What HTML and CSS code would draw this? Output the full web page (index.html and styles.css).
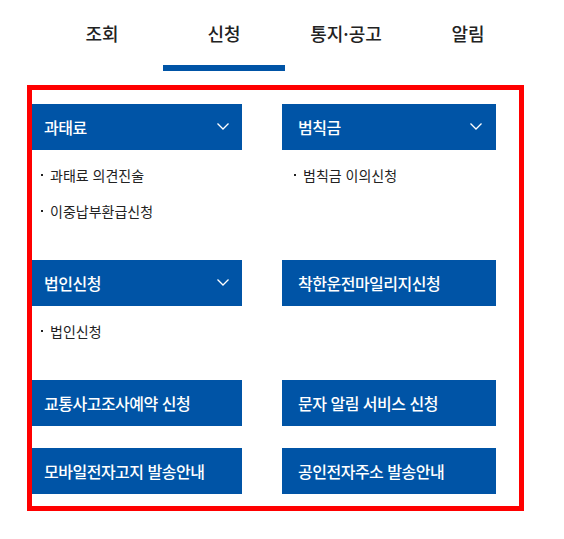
FILE: index.html
```html
<!DOCTYPE html>
<html lang="ko">
<head>
<meta charset="utf-8">
<title>신청</title>
<link rel="stylesheet" href="styles.css">
</head>
<body>
  <nav class="tabs">
    <a class="tab">조회</a>
    <a class="tab tab--active">신청</a>
    <a class="tab">통지·공고</a>
    <a class="tab">알림</a>
  </nav>

  <section class="menu-box">
    <div class="menu-grid">
      <div class="menu-item">
        <div class="menu-btn">과태료
          <svg class="chev" width="12" height="7" viewBox="0 0 12 7"><path d="M0.5 0.5 L6 6 L11.5 0.5" fill="none" stroke="#fff" stroke-width="1.3"/></svg>
        </div>
        <ul class="sub">
          <li>과태료 의견진술</li>
          <li>이중납부환급신청</li>
        </ul>
      </div>
      <div class="menu-item menu-item--right">
        <div class="menu-btn">범칙금
          <svg class="chev" width="12" height="7" viewBox="0 0 12 7"><path d="M0.5 0.5 L6 6 L11.5 0.5" fill="none" stroke="#fff" stroke-width="1.3"/></svg>
        </div>
        <ul class="sub">
          <li>범칙금 이의신청</li>
        </ul>
      </div>

      <div class="menu-item">
        <div class="menu-btn">법인신청
          <svg class="chev" width="12" height="7" viewBox="0 0 12 7"><path d="M0.5 0.5 L6 6 L11.5 0.5" fill="none" stroke="#fff" stroke-width="1.3"/></svg>
        </div>
        <ul class="sub">
          <li>법인신청</li>
        </ul>
      </div>
      <div class="menu-item menu-item--right">
        <div class="menu-btn">착한운전마일리지신청</div>
      </div>

      <div class="menu-item">
        <div class="menu-btn">교통사고조사예약 신청</div>
      </div>
      <div class="menu-item menu-item--right">
        <div class="menu-btn">문자 알림 서비스 신청</div>
      </div>

      <div class="menu-item">
        <div class="menu-btn">모바일전자고지 발송안내</div>
      </div>
      <div class="menu-item menu-item--right">
        <div class="menu-btn">공인전자주소 발송안내</div>
      </div>
    </div>
  </section>
</body>
</html>
```

FILE: styles.css
```css
* {
  box-sizing: border-box;
}

body {
  margin: 0;
  background: #fff;
  font-family: "Noto Sans CJK KR", "Noto Sans", sans-serif;
  color: #222;
}

/* top tab bar */
.tabs {
  display: flex;
  margin-left: 41px;
}

.tab {
  width: 122px;
  padding: 21px 0 20px;
  border-bottom: 6px solid transparent;
  text-align: center;
  font-size: 18px;
  line-height: 24px;
  font-weight: 500;
  color: #222;
}

.tab--active {
  border-bottom-color: #0054a6;
}

/* outlined menu area */
.menu-box {
  width: 497px;
  margin: 14px 0 0 27px;
  border: 5px solid #ff0000;
  padding: 14px 0 12px;
}

.menu-grid {
  display: grid;
  grid-template-columns: 210px 214px;
  column-gap: 40px;
  row-gap: 22px;
  align-items: start;
}

.menu-btn {
  display: flex;
  align-items: center;
  justify-content: space-between;
  height: 46px;
  padding: 0 13px 1px 12px;
  background: #0054a6;
  color: #fff;
  font-size: 16px;
  font-weight: 500;
  letter-spacing: -0.5px;
}

.menu-item--right .menu-btn {
  padding: 0 14px 1px 16px;
}

.chev {
  display: block;
  flex: none;
}

.sub {
  list-style: none;
  margin: 0;
  padding: 13px 0 15px 9px;
  display: flex;
  flex-direction: column;
  gap: 12px;
}

.menu-item--right .sub {
  padding-left: 12px;
}

.sub li {
  display: flex;
  align-items: center;
  font-size: 14px;
  line-height: 24px;
  color: #222;
}

.sub li::before {
  content: "";
  width: 2px;
  height: 2px;
  margin-right: 7px;
  background: #222;
}
```
